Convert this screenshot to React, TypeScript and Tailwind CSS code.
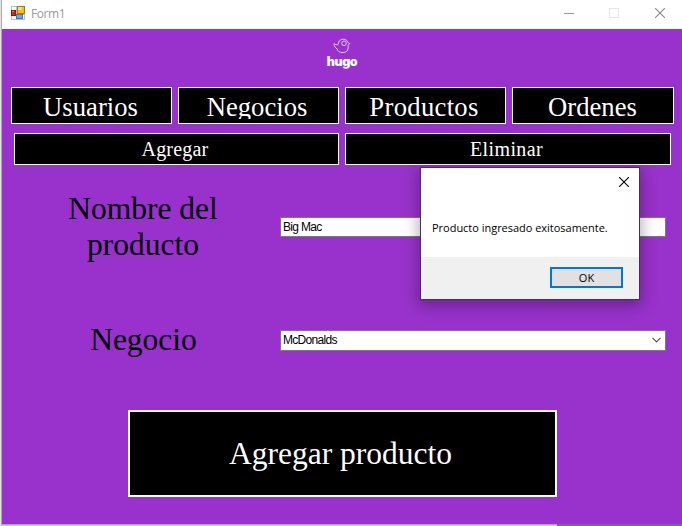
import React from "react";

const serif = "font-['Liberation_Serif',serif]";
const sans = "font-['Liberation_Sans',sans-serif]";
const ui = "font-['Open_Sans',sans-serif]";

function FormIcon() {
  return (
    <svg width="14" height="14" viewBox="0 0 14 14" shapeRendering="crispEdges">
      <rect x="0" y="0" width="14" height="14" fill="#bdbdbd" />
      <rect x="1" y="1" width="4" height="3" fill="#fff" />
      <rect x="1" y="10" width="4" height="3" fill="#fff" />
      <rect x="11" y="9" width="2" height="4" fill="#fff" />
      <rect x="0" y="4" width="5" height="6" fill="#8c1409" />
      <rect x="1" y="5" width="3" height="4" fill="#c92a16" />
      <rect x="1" y="5" width="2" height="1" fill="#e8735e" />
      <rect x="6" y="0" width="8" height="8" fill="#a87809" />
      <rect x="7" y="1" width="6" height="6" fill="#f3bd22" />
      <rect x="7" y="1" width="4" height="3" fill="#ffe382" />
      <rect x="5" y="8" width="7" height="5" fill="#3974c4" />
      <rect x="6" y="9" width="5" height="3" fill="#6aa7ef" />
    </svg>
  );
}

function HugoLogo() {
  return (
    <div className="flex w-10 flex-col items-center">
      <svg width="18" height="16" viewBox="0 0 18 16" fill="none" stroke="#e3c8f2" strokeWidth="1" strokeLinejoin="round">
        <path d="M5.3 6.2C5.3 3 7.4 1.2 10.2 1.2c2.6 0 4.2 1.4 4.7 3.3l1.9 1.2-1.7 1.5v2.6c0 3-2 4.7-4.8 4.7H9c-2.5 0-4.2-1.2-4.8-3.5C2.4 10 1 8.2 1 5.6c1.4 1 2.8 1.3 4.3 1.2" />
        <circle cx="11" cy="5.3" r="2.3" />
      </svg>
      <span className="mt-px font-['Inter',sans-serif] text-[12.5px] leading-[14px] font-black tracking-[-0.4px] text-white">
        hugo
      </span>
    </div>
  );
}

function TopButton({ label, className, shift }: { label: string; className: string; shift: string }) {
  return (
    <button className={`h-[37px] border border-white bg-black text-white ${className}`}>
      <span className={`mb-1 block h-[31px] overflow-hidden pt-[7px] text-[26.67px] leading-[24px] ${shift} ${serif}`}>
        {label}
      </span>
    </button>
  );
}

function SubButton({ label, className }: { label: string; className: string }) {
  return (
    <button className={`h-8 border border-white bg-black text-[20px] leading-[30px] text-white ${serif} ${className}`}>
      {label}
    </button>
  );
}

function Cross({ size, color }: { size: number; color: string }) {
  return (
    <svg width={size} height={size} viewBox="0 0 10 10" stroke={color} strokeWidth="1.1">
      <path d="M0 0L10 10M10 0L0 10" />
    </svg>
  );
}

function TitleBar() {
  return (
    <header className="flex h-[29px] items-start bg-white pl-[9px]">
      <div className="pt-[6px]">
        <FormIcon />
      </div>
      <span className={`ml-[6px] pt-[5px] text-[12px] leading-[18px] tracking-[-0.4px] text-[#999] ${ui}`}>Form1</span>
      <div className="ml-auto flex h-[26px] items-center pr-[17px]">
        <div className="mr-[35px] h-px w-[10px] bg-[#999]" />
        <div className="mr-[36px] h-[10px] w-[10px] border border-[#e5e5e5]" />
        <Cross size={10} color="#888" />
      </div>
    </header>
  );
}

function MessageDialog() {
  return (
    <div
      role="dialog"
      className="absolute top-[167px] left-[420px] flex h-[133px] w-[220px] flex-col border border-[#4b2b62] bg-white shadow-[0_4px_14px_2px_rgba(0,0,0,0.3)]"
    >
      <div className="flex justify-end pt-[9px] pr-[10px]">
        <Cross size={10} color="#000" />
      </div>
      <p className={`mt-[33px] ml-[11px] text-[11px] leading-4 tracking-[-0.02px] whitespace-nowrap text-black ${ui}`}>
        Producto ingresado exitosamente.
      </p>
      <div className="mt-auto flex h-[42px] justify-end bg-[#f0f0f0] pt-[10px] pr-4">
        <button className={`h-[21px] w-[73px] border-2 border-[#0078d7] bg-[#e1e1e1] text-[11px] leading-[18px] text-black ${ui}`}>
          OK
        </button>
      </div>
    </div>
  );
}

export default function App() {
  return (
    <div className="relative h-[526px] w-[682px] overflow-hidden bg-[#e3e3e3]">
      <div className="ml-px h-[524px] border-l border-[#aaa]">
        <TitleBar />
        <main className="flex h-[495px] flex-col bg-[#9932cc]">
          <div className="flex h-[58px] justify-center pt-[9px]">
            <HugoLogo />
          </div>
          <nav className="flex gap-[6px] pl-[9px]">
            <TopButton label="Usuarios" className="w-[161px]" shift="pr-[2px]" />
            <TopButton label="Negocios" className="w-[161px]" shift="pr-[3px]" />
            <TopButton label="Productos" className="w-[161px]" shift="pr-[3px] tracking-[0.3px]" />
            <TopButton label="Ordenes" className="w-[162px]" shift="pr-px" />
          </nav>
          <nav className="mt-[9px] flex gap-[6px] pl-3">
            <SubButton label="Agregar" className="w-[325px] pr-[3px] tracking-[0.2px]" />
            <SubButton label="Eliminar" className="w-[326px] pr-[3px] tracking-[0.4px]" />
          </nav>
          <div className="flex h-[124px] items-center pl-[9px]">
            <label className={`w-[263px] pl-px text-center text-[31.5px] leading-9 text-black ${serif}`}>
              Nombre del
              <br />
              producto
            </label>
            <div className={`ml-[6px] h-5 w-[386px] border border-[#7a7a7a] bg-white pl-[2px] text-[12px] leading-[18px] tracking-[-0.7px] text-black ${sans}`}>
              Big Mac
            </div>
          </div>
          <div className="flex h-[102px] items-center pl-[9px]">
            <label className={`w-[263px] pl-[2px] text-center text-[31.5px] leading-9 text-black ${serif}`}>Negocio</label>
            <div className={`ml-[6px] flex h-[21px] w-[386px] items-center justify-between border border-[#7a7a7a] bg-white pr-1 pl-[2px] text-[12px] leading-[18px] tracking-[-0.7px] text-black ${sans}`}>
              McDonalds
              <svg width="9" height="6" viewBox="0 0 9 6" fill="none" stroke="#555" strokeWidth="1.2">
                <path d="M0.5 0.8L4.5 4.8L8.5 0.8" />
              </svg>
            </div>
          </div>
          <button className={`mt-[19px] ml-[126px] h-[87px] w-[429px] border-2 border-white bg-black pr-1 text-[31.5px] text-white ${serif}`}>
            Agregar producto
          </button>
        </main>
      </div>
      <footer className="flex h-[2px] pl-px">
        <div className="h-[2px] w-[556px] border-t border-[#aaa] bg-[#c8c8c8]" />
        <div className="h-[2px] flex-1 bg-[#74659b]" />
      </footer>
      <MessageDialog />
    </div>
  );
}
